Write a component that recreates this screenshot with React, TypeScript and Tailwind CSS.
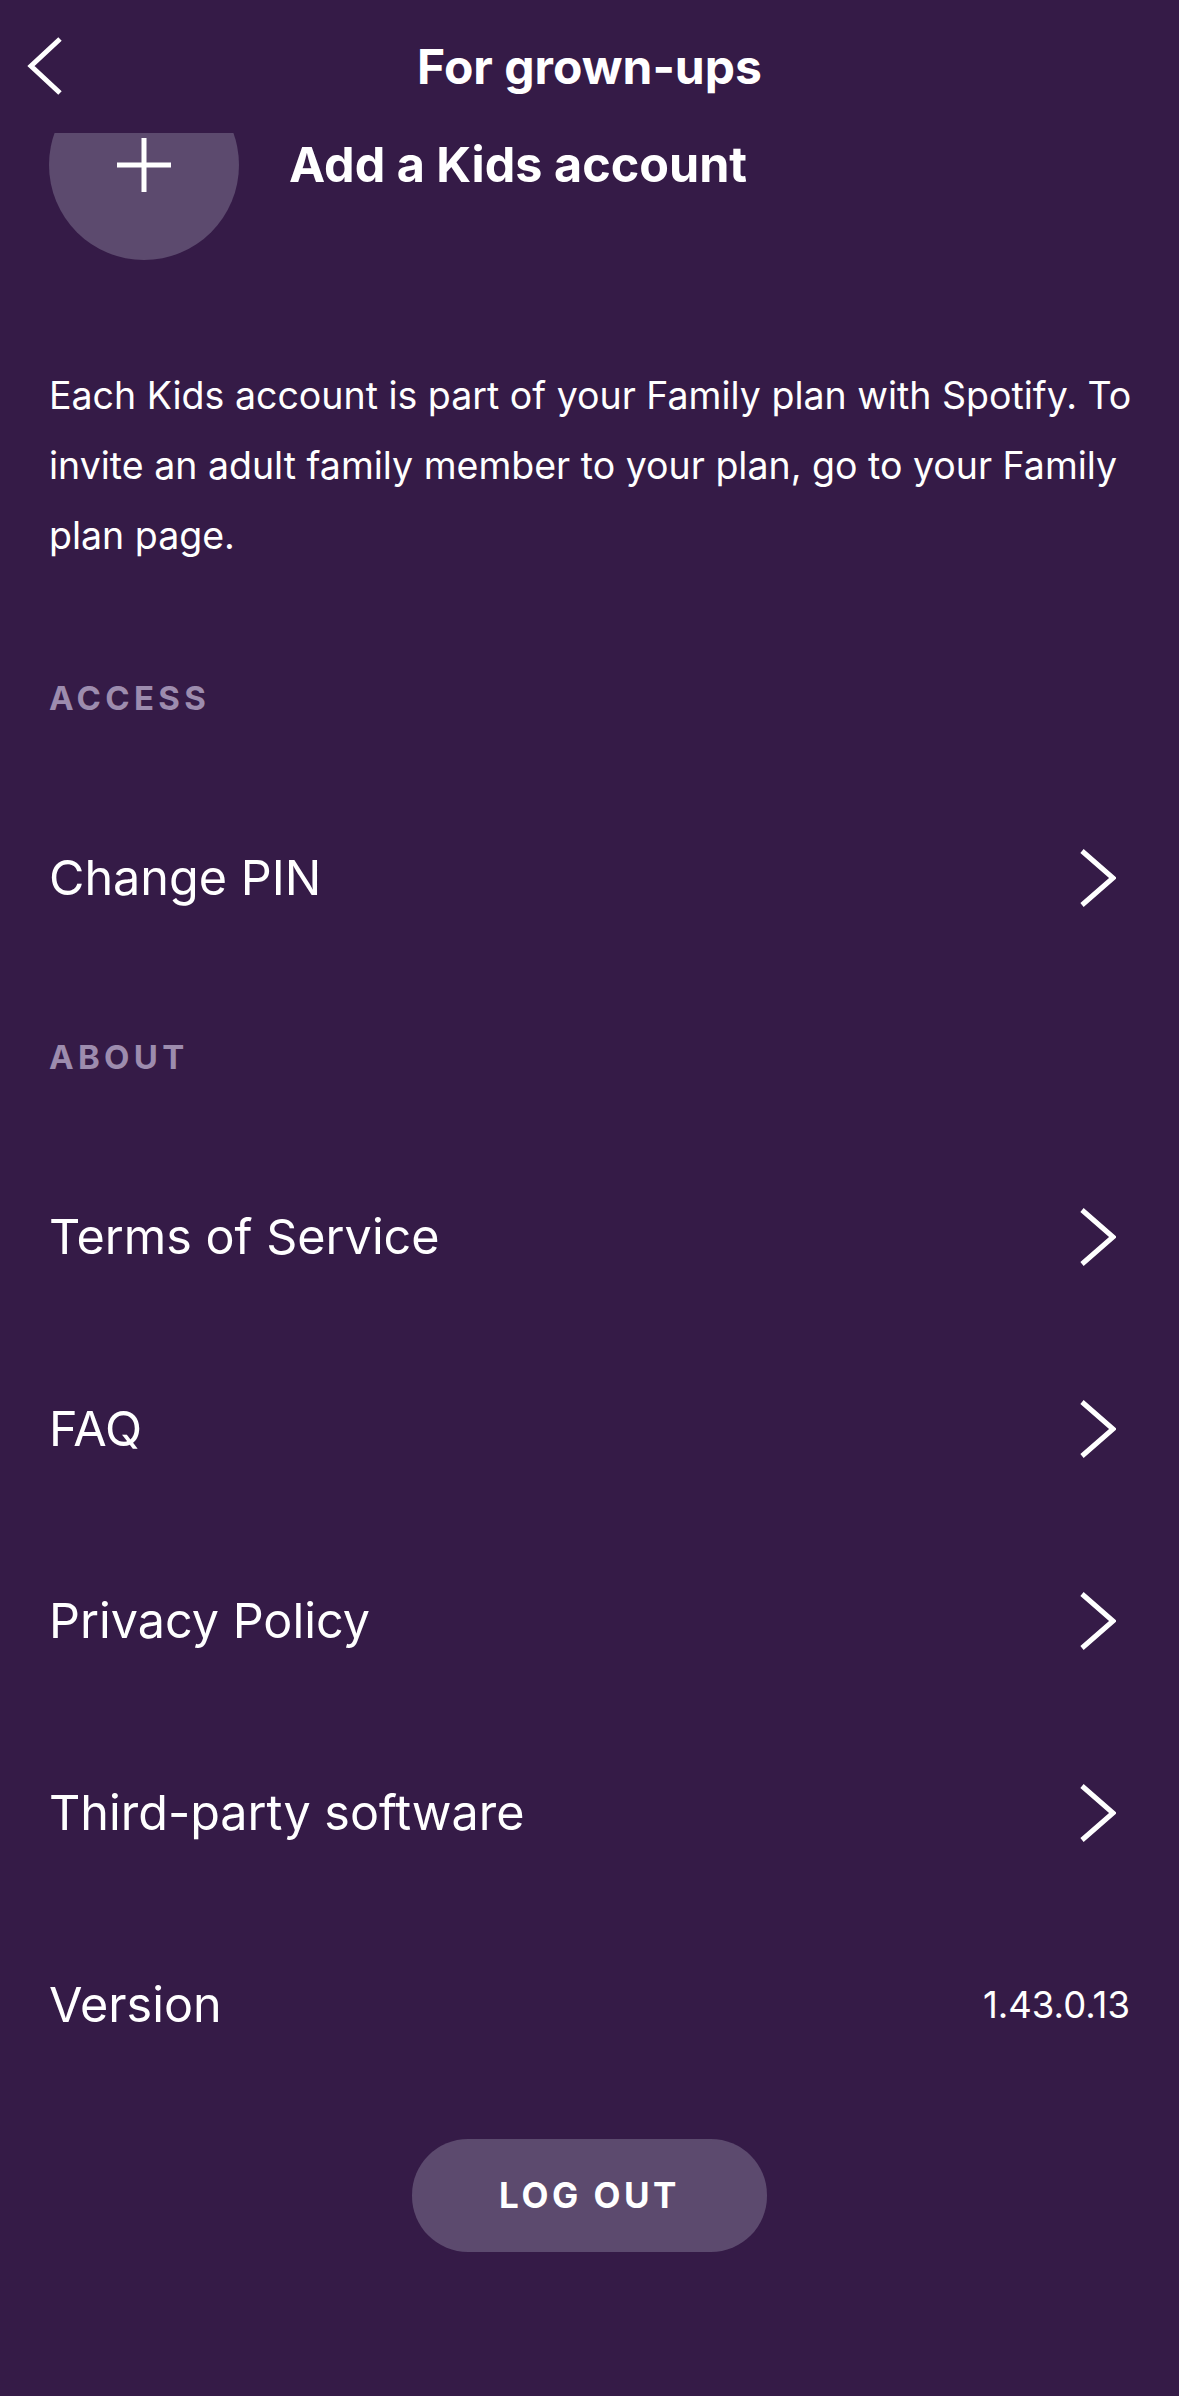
import { ReactNode } from 'react';

function ChevronRight() {
  return (
    <svg width="36" height="58" viewBox="0 0 36 58" fill="none" className="mr-[14px] shrink-0">
      <polyline points="2,2 33,29 2,56" stroke="white" strokeWidth="5" strokeLinejoin="miter" />
    </svg>
  );
}

function SectionLabel({ children, first }: { children: ReactNode; first?: boolean }) {
  return (
    <div
      className={`px-[49px] text-[33px] leading-[40px] font-bold tracking-[0.13em] text-[#9d8cae] ${
        first ? 'mt-[107px]' : 'mt-[63px]'
      } mb-[64px]`}
    >
      {children}
    </div>
  );
}

function Row({ label, right }: { label: string; right?: ReactNode }) {
  return (
    <div className="flex h-[192px] items-center justify-between px-[49px]">
      <span className="text-[48.5px] leading-none text-white">{label}</span>
      {right ?? <ChevronRight />}
    </div>
  );
}

export default function App() {
  return (
    <div
      className="min-h-[2396px] w-[1179px] bg-[#351b47] text-white"
      style={{ fontFamily: 'Inter, Lato, sans-serif' }}
    >
      {/* Header */}
      <header className="relative flex h-[133px] items-center justify-center">
        <button className="absolute left-[27px] top-[37px]">
          <svg width="36" height="58" viewBox="0 0 36 58" fill="none">
            <polyline points="33,2 4,29 33,56" stroke="white" strokeWidth="5" strokeLinejoin="miter" />
          </svg>
        </button>
        <h1 className="text-[48px] font-bold leading-none">For grown-ups</h1>
      </header>

      {/* Add kids account (scrolled under header) */}
      <div className="h-[127px] overflow-hidden px-[49px]">
        <div className="-mt-[63px] flex h-[190px] items-center gap-[50px]">
          <div className="flex h-[190px] w-[190px] shrink-0 items-center justify-center rounded-full bg-[#5c4a6e]">
            <svg width="56" height="56" viewBox="0 0 56 56">
              <path d="M28 1 V55 M1 28 H55" stroke="white" strokeWidth="5" />
            </svg>
          </div>
          <span className="text-[48.5px] font-bold leading-none">Add a Kids account</span>
        </div>
      </div>

      {/* Description */}
      <p className="mt-[101px] whitespace-nowrap px-[49px] text-[37.5px] leading-[70px] text-white">
        Each Kids account is part of your Family plan with Spotify. To
        <br />
        invite an adult family member to your plan, go to your Family
        <br />
        plan page.
      </p>

      <SectionLabel first>ACCESS</SectionLabel>
      <Row label="Change PIN" />

      <SectionLabel>ABOUT</SectionLabel>
      <Row label="Terms of Service" />
      <Row label="FAQ" />
      <Row label="Privacy Policy" />
      <Row label="Third-party software" />
      <Row label="Version" right={<span className="text-[36.5px] leading-none">1.43.0.13</span>} />

      <div className="mt-[38px] flex justify-center">
        <button className="flex h-[113px] w-[355px] items-center justify-center rounded-[56px] bg-[#5c4a6e] text-[35px] font-bold tracking-[0.1em] text-white">
          LOG OUT
        </button>
      </div>
    </div>
  );
}
